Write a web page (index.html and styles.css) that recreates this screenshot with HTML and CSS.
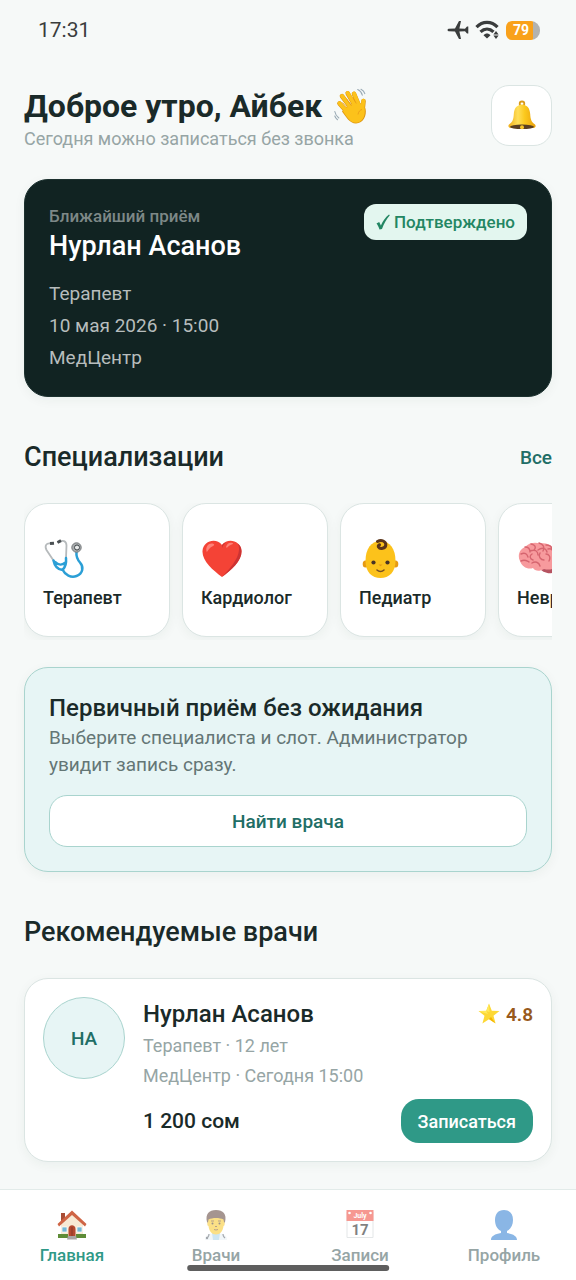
FILE: index.html
```html
<!DOCTYPE html>
<html lang="ru">
<head>
<meta charset="utf-8">
<meta name="viewport" content="width=device-width, initial-scale=1">
<title>МедЦентр</title>
<link rel="stylesheet" href="styles.css">
</head>
<body>
<div class="app">
  <div class="status">
    <span class="status-time">17:31</span>
    <div class="status-icons">
      <svg width="22" height="20" viewBox="0 0 22 20" aria-hidden="true"><path fill="#3a3d3d" d="M1.500 8.800 8 8.600 12 1h2l-1.600 7.600 5.600.2L20 6.500h1.300v7H20l-2-2.300-5.600.2L14 19h-2L8 11.400l-6.500-.2C.2 11 .2 9 1.500 8.800Z"/></svg>
      <svg width="25" height="20" viewBox="0 0 25 20" aria-hidden="true"><g fill="none" stroke="#3a3d3d" stroke-width="3.200"><path d="M1.500 7.200C7.500.8 16.500.8 22.500 7.200"/><path d="M5.500 11.800c3.900-3.700 9.100-3.700 13 0"/></g><path fill="#3a3d3d" d="m12 18.500-3.500-3.300c2-2.200 5-2.200 7 0ZM21 11l2.600 3.400h-5.200ZM21 19l2.600-3.400h-5.200Z"/></svg>
      <span class="battery">79</span>
    </div>
  </div>

  <main class="content">
    <header class="greeting">
      <div>
        <h1 class="greeting-title">Доброе утро, Айбек
          <svg class="wave" viewBox="0 0 36 36" aria-hidden="true">
            <g fill="none" stroke="#dc9410" stroke-linecap="round" stroke-width="4.600"><path d="m5.500 15.500 9 10M8 8.200l9 12M13.700 5.300l7 12M20 5.800l5 12M29.500 13l-1 10"/></g>
            <path fill="#dc9410" d="m10.500 20 14-6.500 7 7c1.500 7-2 14.500-9.500 15-6.500 0-10-7-14-12Z"/>
            <g fill="none" stroke="#fcc21b" stroke-linecap="round" stroke-width="3.800"><path d="m5.500 15.200 9 10M8 7.900l9 12M13.700 5l7 12M20 5.500l5 12M29.300 12.700l-1 10"/></g>
            <path fill="#fcc21b" d="m11 19.500 13-6 6.500 7c1.500 7-2 14-8.500 14.300-6.500 0-9.500-6.800-13-11.300Z"/>
            <path fill="none" stroke="#e99a16" stroke-width=".8" d="m8.500 14.500 4.500 5.300m-.5-9 5 7M19 9.500l3.300 6M24 26.500c.5-3 2-4.500 4-5"/>
            <path fill="none" stroke="#9aabb5" stroke-linecap="round" stroke-width="1.100" d="M23.700 1.500c2.300 1 4 3 4.600 5.700M27 1.200c2 .9 3.300 2.400 3.800 4.400M.8 23.500c.5 2.700 1.800 4.900 4 6.500M.8 28c.5 1.500 1.500 2.800 2.700 3.700"/>
          </svg>
        </h1>
        <p class="greeting-sub">Сегодня можно записаться без звонка</p>
      </div>
      <button class="bell" type="button" aria-label="Уведомления">
        <svg width="30" height="31" viewBox="0 0 30 31" aria-hidden="true">
          <defs><linearGradient id="gold"><stop offset="0" stop-color="#f0ae1a"/><stop offset=".35" stop-color="#ffdf5a"/><stop offset=".6" stop-color="#fbc91d"/><stop offset="1" stop-color="#e9a00c"/></linearGradient></defs>
          <circle cx="15" cy="3.800" r="2.300" fill="none" stroke="#d99a1a" stroke-width="1.800"/>
          <path fill="url(#gold)" d="M15 4.500C9.500 5 7.300 8.300 6.800 14c-.3 5-1 8-4.800 10.500C.8 26 1.500 27.500 3.500 28h23c2-.5 2.700-2 1.500-3.500C24.200 22 23.500 19 23.200 14 22.700 8.300 20.500 5 15 4.500Z"/>
          <ellipse cx="15" cy="26.800" rx="12" ry="2.300" fill="#5b3f22"/><circle cx="15" cy="27.300" r="2" fill="#f7c52b"/>
        </svg>
      </button>
    </header>

    <section class="card visit">
      <div class="visit-top">
        <div>
          <p class="visit-label">Ближайший приём</p>
          <h2 class="visit-name">Нурлан Асанов</h2>
        </div>
        <span class="badge"><svg width="14" height="16" viewBox="0 0 14 16" aria-hidden="true"><path fill="#238663" d="M.5 9.500 3.200 8 4.900 11.500C6.800 7 9.300 3.500 13 .5L13.800 1.300C10.500 5 8 9.500 6 15L3.500 15.500C2.700 13 1.800 11 .5 9.500Z"/></svg>Подтверждено</span>
      </div>
      <p class="visit-line">Терапевт</p>
      <p class="visit-line">10 мая 2026 · 15:00</p>
      <p class="visit-line">МедЦентр</p>
    </section>

    <div class="section-head">
      <h2 class="section-title">Специализации</h2>
      <a class="section-link" href="#">Все</a>
    </div>

    <div class="specs">
      <button class="card spec" type="button">
        <svg class="spec-icon" viewBox="0 0 42 42" aria-hidden="true">
          <g fill="none" stroke-linecap="round"><path stroke="#b6babc" stroke-width="1.800" d="M8 5.500C3 4.500 1.500 8 3.500 12l7 10.500M15 4c5-2.500 8.500-1 8.500 3.500L23 20"/>
          <path stroke="#2b9fd6" stroke-width="2.500" d="M10.500 22.500c1 5 4 9 9 9.500 3-3 4-7 3.500-12M12 24c3.500 3.500 8 3 11 0M19.500 31.500C22 37 28 40 33.500 38c6.500-2.500 7.500-9 3.500-13.500-3-3.500-4-6-3.500-10.500"/></g>
          <path stroke="#4b5053" stroke-width="3" d="m7 5.500 4-.3M14.500 4.500l3.500-1.800"/>
          <circle cx="33.500" cy="9.500" r="4.700" fill="#a8abad" stroke="#75797b"/><circle cx="34" cy="9.500" r="2.500" fill="#e8eaea" stroke="#41484b"/>
        </svg>
        Терапевт
      </button>
      <button class="card spec" type="button">
        <svg class="spec-icon" viewBox="0 0 42 42" aria-hidden="true">
          <path fill="#f44336" d="M21 39C12 32 1 23 1.500 13 2 3 15-1 21 7c6-8 19-4 19.500 6C41 23 30 32 21 39Z"/>
          <path fill="#c33" d="M40.500 13C41 23 30 32 21 39c8-9 16-17 17-27 .3-3-.5-5-1.500-6.500 2.500 1.500 4 4 4 7.500ZM21 7c1-1 2-2 4-2.500-2 1.500-3 3-4 5.500Z"/>
          <path fill="#ff8177" d="M5.500 13.500c-1-5 2-8.500 6-8 4 1 0 3-2 4-2 1.500-3 5-4 4ZM25 9c1-4 4-5 6.500-4 1.500 1-1 1.500-3 2.500S26 11 25 9Z"/>
        </svg>
        Кардиолог
      </button>
      <button class="card spec" type="button">
        <svg class="spec-icon" viewBox="0 0 42 42" aria-hidden="true">
          <ellipse cx="6.500" cy="26" rx="2.800" ry="3.600" fill="#e69a13"/><ellipse cx="36.500" cy="26" rx="2.800" ry="3.600" fill="#e69a13"/>
          <path fill="#fcc21b" d="M21.500 3C12 3 6.500 11 6.500 23c0 11 6.500 17 15 17s15-6 15-17c0-12-5.500-20-15-20Z"/>
          <path fill="none" stroke="#5c3519" stroke-linecap="round" stroke-width="3" d="M18.500 3.500c4-2.500 8.500 0 8.300 3.500C26.500 10.500 21 11.500 19.500 9c-.5-1 0-2 1-2.300"/>
          <circle cx="14.500" cy="24.500" r="2.100" fill="#493425"/><circle cx="28.500" cy="24.500" r="2.100" fill="#493425"/><path fill="#e69a13" d="M19.500 26.500h4l-2 1.800Z"/><path fill="none" stroke="#795023" stroke-linecap="round" stroke-width="1.600" d="M18 32c2 1.800 5 1.800 7 0"/>
        </svg>
        Педиатр
      </button>
      <button class="card spec" type="button">
        <svg class="spec-icon" viewBox="0 0 42 42" aria-hidden="true">
          <path fill="#b65361" d="M22 29c2 5 9 7 13 6l5-6Z"/>
          <path fill="#f79a9d" d="M3 23C0 17 3 11 8 9c5-5 11-4.500 15-3.500 7-1 12 1.500 14 6.500 5 4 6 11 2 16-3 4-8 4-12 3-5 3-9 2-11-1-5 2-11-1-13-7Z"/>
          <path fill="none" stroke="#d6656f" stroke-linecap="round" stroke-width="1.400" d="M8 9c4 0 5 2 5 5m-9 2c4-2 6 0 7 3m-7 4c4-2 6 0 8 1m2-18c5 1 5 4 3 6m5-7c4 1 6 4 4 8m3-6c4 0 6 2 6 5m-22 1c5-2 8 0 8 4m-6-1c-3 2-2 5 1 6m5-10c4-3 8-2 9 2m-7 1c-2 4 1 7 4 7m4-11c4-1 6 2 6 6m-8-1c3 0 5 3 3 7M15 25c3-2 7-1 8 3"/>
        </svg>
        Невролог
      </button>
    </div>

    <section class="card promo">
      <h2 class="promo-title">Первичный приём без ожидания</h2>
      <p class="promo-text">Выберите специалиста и слот. Администратор увидит запись сразу.</p>
      <button class="promo-button" type="button">Найти врача</button>
    </section>

    <h2 class="section-title section-title-solo">Рекомендуемые врачи</h2>

    <article class="card doctor">
      <div class="avatar">НА</div>
      <div class="doctor-body">
        <div class="doctor-row">
          <h3 class="doctor-name">Нурлан Асанов</h3>
          <span class="rating"><svg width="22" height="22" viewBox="0 0 22 22" aria-hidden="true"><path fill="#fdd835" d="m11 .500 2.800 7.200 7.700.3-6 4.800 2.100 7.700L11 16.300l-6.600 4.200 2.100-7.700L.5 8l7.700-.3Z"/><path fill="#ffe95c" d="m11 1 .5 8L8.300 8ZM1 8.300l7.300-.3 1.700 3Z"/><path fill="#f4b400" d="m13 14 4.200 6.200L11 16.100Z"/></svg>4.8</span>
        </div>
        <p class="doctor-meta">Терапевт · 12 лет</p>
        <p class="doctor-meta">МедЦентр · Сегодня 15:00</p>
        <div class="doctor-row doctor-foot">
          <span class="price">1 200 сом</span>
          <button class="book" type="button">Записаться</button>
        </div>
      </div>
    </article>
  </main>

  <nav class="tabs">
    <a class="tab tab-active" href="#" aria-current="page">
      <svg class="tab-icon" viewBox="0 0 30 30" aria-hidden="true">
        <path fill="#a84d35" d="M4 3h4v9H4Z"/><path fill="#f7ead5" d="M4 14 15 4l11 10v13H4Z"/>
        <path fill="#cf6545" d="M15 .500.500 14l1.500 2.500L15 5l13 11.500 1.500-2.500Z"/>
        <path fill="#74b8d5" stroke="#fff" stroke-width=".7" d="M5 17h5v5H5ZM20 17h5v5h-5Z"/>
        <path fill="#5e8c37" d="M1 24h10v4H1ZM19 24h10v4H19Z"/><path fill="#b5492f" d="M11.500 26v-7c0-5 7-5 7 0v7Z"/><path fill="#8a3929" d="M14.500 17h1v9h-1Z"/><path fill="#a9a5a5" d="M11 26h8l1 3.500H10Z"/>
      </svg>
      Главная
    </a>
    <a class="tab" href="#">
      <svg class="tab-icon" viewBox="0 0 30 30" aria-hidden="true">
        <path fill="#e9f1f5" d="M4 30c0-5 4-7 11-7s11 2 11 7Z"/><path fill="#a5d2ea" d="M11 23h8l-1 7h-6Z"/>
        <path fill="#5d4037" d="M6 12C4 4 8 0 15 0s11 4 9 12l-2 3H8Z"/>
        <path fill="#f9c825" d="M7.500 9.500c4-2 11-2 15 0l.5 2.500c1 0 1 4-.5 4C22 21 19 24.500 15 24.500s-7-3.500-7.500-8.500C6 16 6 12 7 12Z"/>
        <circle cx="11.500" cy="13.500" r="1" fill="#4b3a2e"/><circle cx="18.500" cy="13.500" r="1" fill="#4b3a2e"/><path stroke="#7c562a" fill="none" d="M10 11h3m4 0h3m-7 8.500q2 1 4 0m-3-3h2"/>
        <path fill="none" stroke="#59616a" stroke-width="1.200" d="M8 24c0 3-1 3-2 4m16-4c0 3 1 3 2 4"/><circle cx="6" cy="28" r="1.200" fill="#59616a"/>
      </svg>
      Врачи
    </a>
    <a class="tab" href="#">
      <svg class="tab-icon" viewBox="0 0 30 30" aria-hidden="true">
        <path fill="#fff" stroke="#cfd4d6" d="M2 2h26v25.500H2Z"/><path fill="#f04438" d="M1.500 0h27v11h-27Z"/>
        <circle cx="4.500" cy="3" r="1.300" fill="#fff"/><circle cx="25.500" cy="3" r="1.300" fill="#fff"/>
        <text class="calendar-month" x="15" y="8">July</text><text class="calendar-day" x="15" y="25">17</text>
      </svg>
      Записи
    </a>
    <a class="tab" href="#">
      <svg class="tab-icon" viewBox="0 0 30 30" aria-hidden="true"><path fill="#2b7bd0" d="M15 0c6 0 9 4 9 10 0 5-2 9-6 11v2c6 1 10 3 10 7H2c0-4 4-6 10-7v-2c-4-2-6-6-6-11C6 4 9 0 15 0Z"/></svg>
      Профиль
    </a>
    <span class="home-bar"></span>
  </nav>
</div>
</body>
</html>
```
FILE: styles.css
```css
* { box-sizing: border-box; }

body {
  margin: 0;
  background: #f6f9f8;
  color: #1a2a29;
  font-family: Roboto, "Noto Sans", sans-serif;
}

h1, h2, h3, p { margin: 0; }

button { font-family: inherit; cursor: pointer; }

a { color: inherit; text-decoration: none; }

.app {
  display: flex;
  flex-direction: column;
  min-height: 100vh;
}

.status {
  display: flex;
  align-items: center;
  justify-content: space-between;
  height: 60px;
  padding: 0 36px 0 38px;
}

.status-time {
  font-size: 21px;
  color: #3a3d3d;
}

.status-icons {
  display: flex;
  align-items: center;
  gap: 6px;
}

.battery {
  width: 34px;
  padding-right: 4px;
  border-radius: 6px 9px 9px 6px;
  background: linear-gradient(90deg, #f9a11b 80%, #b3b3b0 80%);
  color: #fff;
  font-size: 14px;
  font-weight: 700;
  line-height: 19px;
  text-align: center;
}

.content {
  flex: 1;
  padding: 25px 24px 27px;
}

.greeting {
  display: flex;
  align-items: flex-start;
  justify-content: space-between;
  margin-bottom: 28px;
}

.greeting-title {
  display: flex;
  align-items: center;
  gap: 12px;
  font-size: 32px;
  font-weight: 700;
  line-height: 42px;
}

.wave { width: 36px; height: 36px; }

.greeting-sub {
  color: #96a5a5;
  font-size: 18px;
  line-height: 24px;
}

.bell {
  display: flex;
  align-items: center;
  justify-content: center;
  width: 61px;
  height: 61px;
  border: 1px solid #dbe5e3;
  border-radius: 18px;
  background: #fff;
}

.card {
  border: 1px solid #dbe5e3;
  border-radius: 24px;
  background: #fff;
  box-shadow: 0 3px 12px rgba(20, 50, 45, 0.05);
}

.visit {
  padding: 24px 24px 22px;
  border-color: #1c312f;
  background: #112322;
}

.visit-top {
  display: flex;
  align-items: flex-start;
  justify-content: space-between;
  margin-bottom: 14px;
}

.visit-label {
  color: #7d8887;
  font-size: 17px;
  font-weight: 500;
  line-height: 24px;
}

.visit-name {
  color: #fff;
  font-size: 27px;
  font-weight: 500;
  line-height: 36px;
}

.badge {
  display: flex;
  align-items: center;
  gap: 4px;
  padding: 0 12px;
  border-radius: 12px;
  background: #e3f6ef;
  color: #238663;
  font-size: 17px;
  font-weight: 500;
  line-height: 36px;
}

.visit-line {
  color: #b7bdbd;
  font-size: 19px;
  line-height: 32px;
}

.section-head {
  display: flex;
  align-items: center;
  justify-content: space-between;
  margin: 42px 0 28px;
}

.section-title {
  font-size: 27px;
  font-weight: 500;
  line-height: 36px;
}

.section-title-solo { margin: 42px 0 28px; }

.section-link {
  color: #216e66;
  font-size: 19px;
  font-weight: 500;
}

.specs {
  display: flex;
  gap: 12px;
  overflow-x: auto;
  scrollbar-width: none;
  padding-bottom: 3px;
  margin-bottom: 27px;
}

.spec {
  display: flex;
  flex: 0 0 146px;
  flex-direction: column;
  align-items: flex-start;
  justify-content: center;
  gap: 6px;
  height: 134px;
  padding: 8px 18px 0;
  color: #1a2a29;
  font-size: 18px;
  font-weight: 500;
  line-height: 24px;
}

.spec-icon { width: 42px; height: 42px; }

.promo {
  padding: 24px;
  border-color: #a9d4ce;
  background: #e7f5f5;
}

.promo-title {
  font-size: 24px;
  font-weight: 500;
  line-height: 32px;
}

.promo-text {
  color: #647675;
  font-size: 19px;
  line-height: 27px;
}

.promo-button {
  width: 100%;
  height: 52px;
  margin-top: 17px;
  border: 1px solid #a9d4ce;
  border-radius: 18px;
  background: #fff;
  color: #216e66;
  font-size: 19px;
  font-weight: 500;
}

.doctor {
  display: flex;
  gap: 18px;
  padding: 18px;
}

.avatar {
  display: flex;
  flex: none;
  align-items: center;
  justify-content: center;
  width: 82px;
  height: 82px;
  border: 1px solid #a9d4ce;
  border-radius: 50%;
  background: #e7f5f5;
  color: #216e66;
  font-size: 19px;
  font-weight: 500;
}

.doctor-body { flex: 1; }

.doctor-row {
  display: flex;
  align-items: center;
  justify-content: space-between;
}

.doctor-name {
  font-size: 24px;
  font-weight: 500;
  line-height: 34px;
}

.rating {
  display: flex;
  align-items: center;
  gap: 6px;
  color: #98591b;
  font-size: 19px;
  font-weight: 600;
}

.doctor-meta {
  color: #96a5a5;
  font-size: 18px;
  line-height: 30px;
}

.doctor-foot { margin-top: 8px; }

.price {
  font-size: 21px;
  font-weight: 500;
}

.book {
  height: 44px;
  padding: 0 17px;
  border: 0;
  border-radius: 18px;
  background: #2f9987;
  color: #fff;
  font-size: 18px;
  font-weight: 500;
}

.tabs {
  position: sticky;
  bottom: 0;
  display: grid;
  grid-template-columns: repeat(4, 1fr);
  height: 91px;
  padding-top: 20px;
  border-top: 1px solid #e2ebe9;
  background: #fff;
}

.tab {
  display: flex;
  flex-direction: column;
  align-items: center;
  gap: 4px;
  color: #96a5a5;
  font-size: 17px;
  font-weight: 500;
  line-height: 22px;
}

.tab-active { color: #2f9987; }

.tab-icon {
  width: 30px;
  height: 30px;
  opacity: 0.55;
}

.tab-active .tab-icon { opacity: 1; }

.calendar-month {
  fill: #fff;
  font-size: 7px;
  font-weight: 700;
  text-anchor: middle;
}

.calendar-day {
  fill: #1a1a1a;
  font-size: 15px;
  font-weight: 700;
  text-anchor: middle;
}

.home-bar {
  position: absolute;
  bottom: 9px;
  left: 50%;
  width: 35%;
  height: 6px;
  border-radius: 3px;
  background: #5e5e5e;
  transform: translateX(-50%);
}
```
